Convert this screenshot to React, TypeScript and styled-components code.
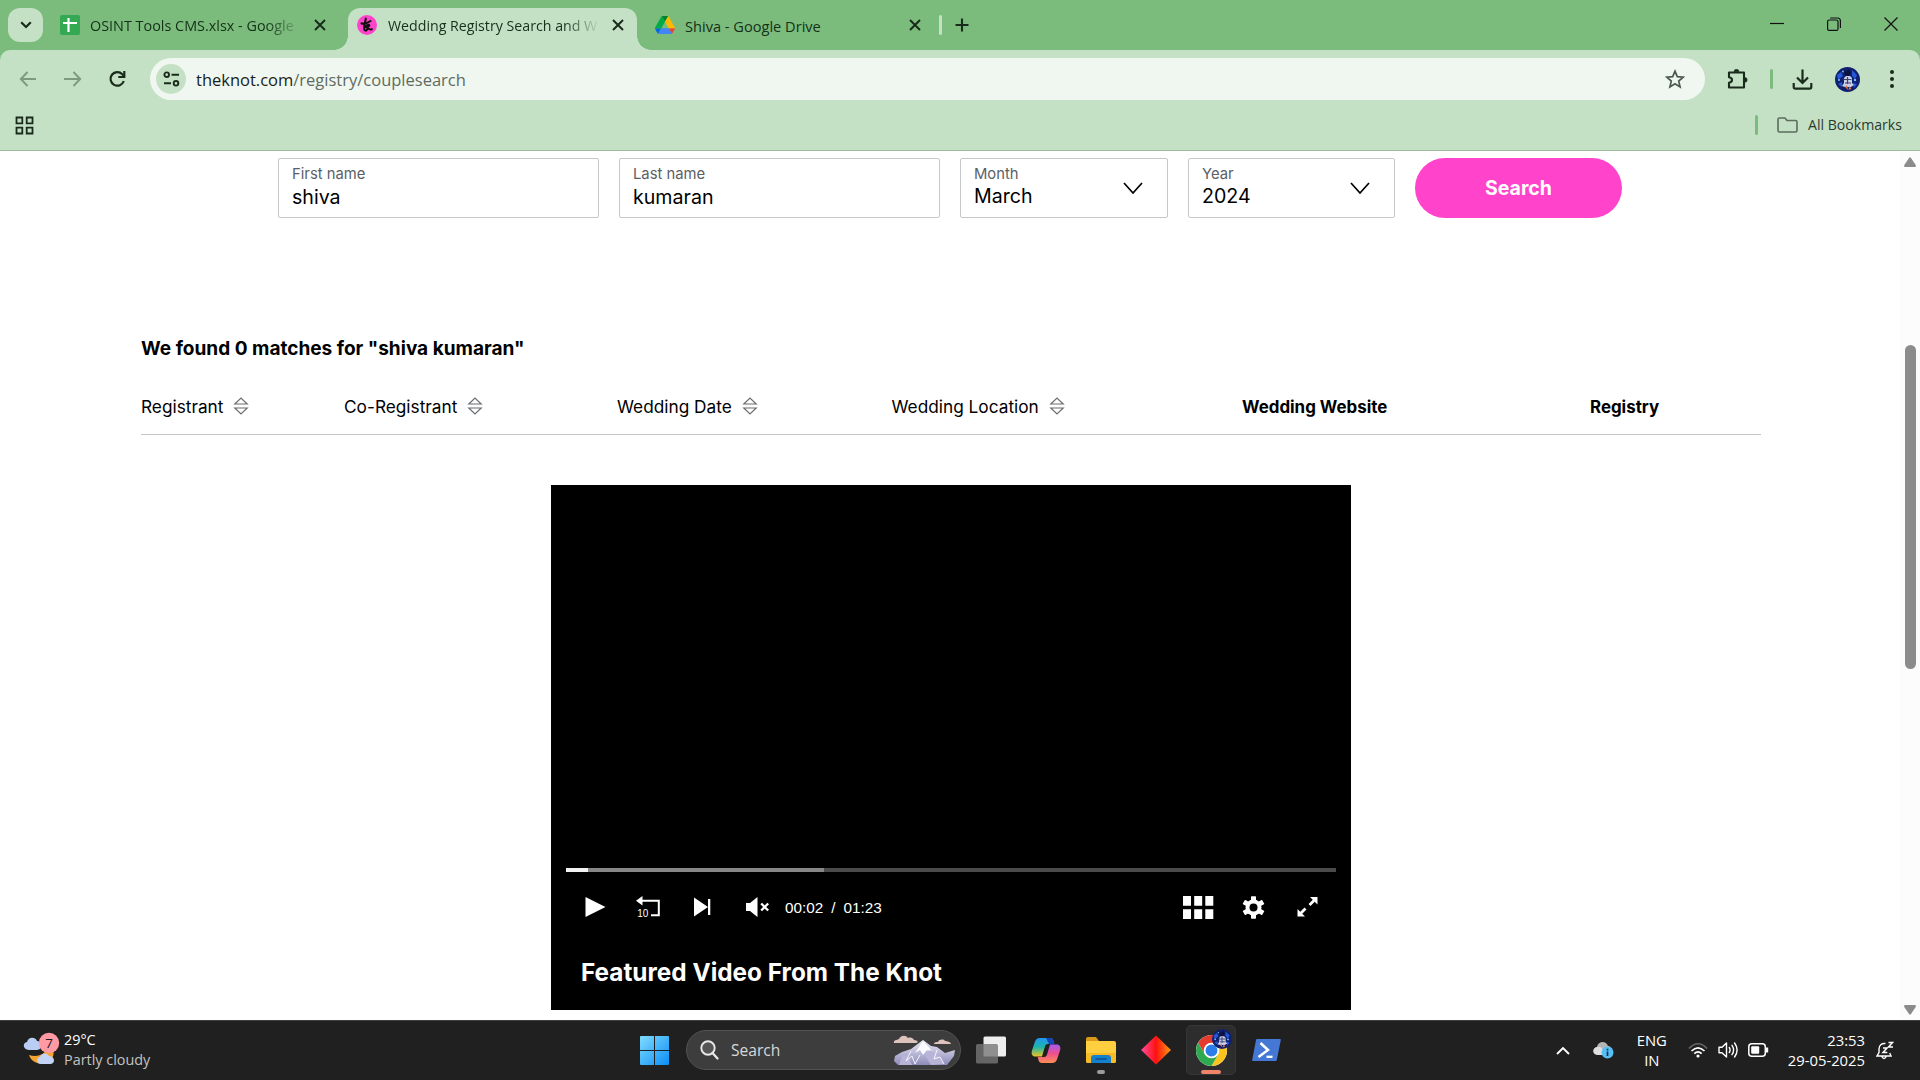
import React from 'react';
import styled, { createGlobalStyle } from 'styled-components';

const GlobalStyle = createGlobalStyle`
  * { box-sizing: border-box; }
  body { margin: 0; background: #fff; overflow: hidden; }
  svg { display: block; flex: none; }
`;

const ui = `"Open Sans", "Noto Sans", sans-serif`;
const web = `Inter, "Liberation Sans", sans-serif`;

const Screen = styled.div`
  width: 1920px;
  height: 1080px;
  display: flex;
  flex-direction: column;
  overflow: hidden;
`;

/* ---------- browser chrome ---------- */

const TabStrip = styled.header`
  height: 50px;
  flex: none;
  display: flex;
  align-items: flex-start;
  padding-left: 8px;
  background: #7bbc7c;
  font-family: ${ui};
`;

const TabSearch = styled.button`
  width: 35px;
  height: 34px;
  margin-top: 8px;
  display: grid;
  place-items: center;
  padding: 0;
  border: 0;
  border-radius: 12px;
  background: #c5e1c5;
`;

const Tab = styled.div<{ $active?: boolean; $width: number; $left: number; $right: number }>`
  position: relative;
  width: ${(p) => p.$width}px;
  height: 42px;
  margin-top: 8px;
  padding: 0 ${(p) => p.$right}px 8px ${(p) => p.$left}px;
  display: flex;
  align-items: center;
  border-radius: 12px 12px 0 0;
  background: ${(p) => (p.$active ? '#c5e1c5' : 'transparent')};
`;

const TabFlare = styled.i<{ $side: 'left' | 'right' }>`
  position: absolute;
  bottom: 0;
  ${(p) => p.$side}: -14px;
  width: 14px;
  height: 14px;
  background: radial-gradient(
    circle at ${(p) => (p.$side === 'left' ? '0 0' : '100% 0')},
    transparent 13.5px,
    #c5e1c5 14px
  );
`;

const TabTitle = styled.span<{ $gap: number; $size: number; $fade?: boolean }>`
  flex: 1;
  margin-left: ${(p) => p.$gap}px;
  margin-right: 12px;
  white-space: nowrap;
  font-size: ${(p) => p.$size}px;
  line-height: 22px;
  padding-top: 1px;
  color: #16301a;
  ${(p) => p.$fade && 'mask-image: linear-gradient(to right, #000 calc(100% - 36px), transparent);'}
`;

const StripDivider = styled.i`
  width: 3px;
  height: 20px;
  margin: 15px 13px 0 0;
  border-radius: 2px;
  background: #c5e1c5;
`;

const NewTab = styled.div`
  margin-top: 18px;
`;

const WindowButtons = styled.div`
  margin: 17px 22px 0 auto;
  display: flex;
  align-items: center;
  gap: 43px;
`;

const ToolbarBack = styled.div`
  height: 101px;
  flex: none;
  background: #7bbc7c;
`;

const ToolbarArea = styled.div`
  height: 101px;
  border-radius: 10px 10px 0 0;
  background: #c5e1c5;
  border-bottom: 1px solid #9dbb9e;
  font-family: ${ui};
`;

const Toolbar = styled.div`
  height: 58px;
  display: flex;
  align-items: center;
  padding: 0 20px 0 18px;
`;

const NavIcons = styled.div`
  width: 132px;
  display: flex;
  gap: 25px;
`;

const AddressBar = styled.div`
  width: 1555px;
  height: 42px;
  display: flex;
  align-items: center;
  padding: 0 20px 0 6px;
  border-radius: 21px;
  background: #f0f7f0;
`;

const SiteInfo = styled.div`
  width: 30px;
  height: 30px;
  display: grid;
  place-items: center;
  border-radius: 50%;
  background: #c5e1c5;
`;

const Url = styled.span`
  flex: 1;
  margin-left: 10px;
  padding-top: 1px;
  font-size: 16.5px;
  line-height: 24px;
  color: #5f6b60;
  b { font-weight: 400; color: #18221a; }
`;

const ToolbarActions = styled.div`
  flex: 1;
  display: flex;
  align-items: center;
  margin-left: 22px;
`;

const ActionGroup = styled.div<{ $gap: number; $before?: number }>`
  display: flex;
  align-items: center;
  gap: ${(p) => p.$gap}px;
  margin-left: ${(p) => p.$before ?? 0}px;
`;

const GreenDivider = styled.i`
  width: 3px;
  height: 20px;
  border-radius: 2px;
  background: #7bbc7c;
`;

const BookmarksBar = styled.div`
  height: 34px;
  display: flex;
  align-items: center;
  padding: 0 18px 0 15px;
  font-size: 14.1px;
  color: #2c3a2e;
`;

const AllBookmarks = styled.div`
  margin-left: auto;
  padding-bottom: 1px;
  display: flex;
  align-items: center;
  white-space: nowrap;
  svg { margin: 0 10px 0 19px; }
`;

/* ---------- page ---------- */

const Viewport = styled.div`
  flex: 1;
  min-height: 0;
  display: flex;
`;

const Page = styled.main`
  flex: 1;
  padding: 7px 139px 0 141px;
  font-family: ${web};
  color: #000;
`;

const SearchForm = styled.div`
  display: flex;
  padding-left: 137px;
  gap: 20px;
`;

const Field = styled.div<{ $width: number; $raise?: boolean }>`
  width: ${(p) => p.$width}px;
  height: 60px;
  display: flex;
  align-items: center;
  justify-content: space-between;
  padding: 0 24px 0 13px;
  border: 1px solid #c6c9cb;
  border-radius: 2px;
  div { margin-top: -3px; }
  span { line-height: ${(p) => (p.$raise ? 25 : 26)}px; }
`;

const FieldLabel = styled.label`
  display: block;
  font-size: 14.8px;
  line-height: 20px;
  color: #5b6067;
`;

const FieldValue = styled.span`
  display: block;
  font-size: 19.6px;
`;

const SearchButton = styled.button`
  width: 207px;
  height: 60px;
  padding: 0;
  border: 0;
  border-radius: 30px;
  background: #ff44cb;
  color: #fff;
  font: 700 19.5px ${web};
`;

const ResultTitle = styled.h2`
  margin: 117px 0 0;
  font-size: 19.05px;
  font-weight: 700;
  line-height: 28px;
`;

const ResultHead = styled.div`
  height: 72px;
  display: grid;
  grid-template-columns: 203px 273px 274.5px 350.5px 348px 1fr;
  align-items: center;
  padding-top: 15px;
  border-bottom: 1px solid #c4c5c6;
`;

const HeadCell = styled.div<{ $bold?: boolean }>`
  display: flex;
  align-items: center;
  gap: 10px;
  white-space: nowrap;
  font-size: ${(p) => (p.$bold ? 16.9 : 17.25)}px;
  font-weight: ${(p) => (p.$bold ? 700 : 400)};
  padding-top: ${(p) => (p.$bold ? 1 : 0)}px;
`;

const Player = styled.section`
  width: 800px;
  height: 525px;
  margin: 50px 0 0 410px;
  display: flex;
  flex-direction: column;
  justify-content: flex-end;
  padding: 0 15px;
  background: #000;
  color: #fff;
`;

const Progress = styled.div`
  display: flex;
  height: 4px;
  background: #4b4b4b;
`;

const Segment = styled.i<{ $width: number; $color: string }>`
  width: ${(p) => p.$width}px;
  background: ${(p) => p.$color};
`;

const Controls = styled.div`
  height: 70px;
  display: flex;
  align-items: center;
  padding: 0 17px 0 18px;
`;

const ControlGroup = styled.div<{ $gap: number; $end?: boolean }>`
  display: flex;
  align-items: center;
  gap: ${(p) => p.$gap}px;
  margin-left: ${(p) => (p.$end ? 'auto' : 0)};
`;

const Time = styled.span`
  display: flex;
  gap: 8px;
  margin-left: 14px;
  padding-top: 1px;
  font: 15.3px "Liberation Sans", sans-serif;
`;

const VideoTitle = styled.h3`
  height: 69px;
  margin: -1px 0 0 15px;
  padding-top: 13px;
  font-size: 24.35px;
  font-weight: 700;
  line-height: 36px;
`;

const Scrollbar = styled.div`
  width: 20px;
  display: flex;
  flex-direction: column;
  align-items: center;
  padding: 6px 0 5px;
  background: #fcfcfc;
`;

const Thumb = styled.i`
  width: 11px;
  height: 324px;
  margin: 178px 0 auto;
  border-radius: 6px;
  background: #8b8b8b;
`;

/* ---------- taskbar ---------- */

const TaskbarRoot = styled.footer`
  height: 60px;
  flex: none;
  display: flex;
  align-items: center;
  padding-bottom: 1px;
  border-top: 1px solid #3d3d3d;
  background: #202020;
  color: #fff;
  font-family: ${ui};
  font-size: 14.4px;
`;

const Weather = styled.div`
  width: 640px;
  display: flex;
  align-items: center;
  padding-left: 23px;
  gap: 4px;
  line-height: 20px;
`;

const Muted = styled.div`
  color: #c3c3c3;
`;

const SearchPill = styled.div`
  width: 275px;
  height: 40px;
  margin: 0 5px 0 17px;
  display: flex;
  align-items: center;
  padding: 0 4px 0 13px;
  border: 1px solid #525252;
  border-radius: 20px;
  background: #3d3d3d;
  color: #d8d8d8;
  font-size: 15.6px;
`;

const PillText = styled.span`
  flex: 1;
  margin-left: 12px;
`;

const Apps = styled.div`
  display: flex;
  align-items: center;
  gap: 5px;
`;

const AppSlot = styled.div<{ $active?: boolean }>`
  position: relative;
  width: 50px;
  height: 50px;
  display: grid;
  place-items: center;
  border-radius: 5px;
  background: ${(p) => (p.$active ? '#2d2d2d' : 'transparent')};
  border: 1px solid ${(p) => (p.$active ? '#363636' : 'transparent')};
`;

const RunMark = styled.i<{ $wide?: boolean }>`
  position: absolute;
  bottom: 0;
  left: 50%;
  transform: translateX(-50%);
  width: ${(p) => (p.$wide ? 20 : 8)}px;
  height: 4px;
  border-radius: 2px;
  background: ${(p) => (p.$wide ? '#f08369' : '#9b9b9b')};
`;

const ChromeBadge = styled.div`
  position: absolute;
  top: 3px;
  right: 3px;
`;

const Tray = styled.div`
  margin-left: auto;
  padding-right: 26px;
  display: flex;
  align-items: center;
`;

const CloudStatus = styled.span`
  margin-left: 23px;
`;

const Lang = styled.div`
  margin: 0 21px 0 23px;
  text-align: center;
  font-size: 14.8px;
  line-height: 20px;
  width: 30px;
  display: flex;
  flex-direction: column;
  align-items: center;
`;

const Clock = styled.div`
  margin: 0 11px 0 19px;
  text-align: right;
  font-size: 14.8px;
  line-height: 20px;
`;

const StatusIcons = styled.div`
  display: flex;
  align-items: center;
  gap: 10px;
`;

/* ---------- icons ---------- */

const CloseX = () => (
  <svg width="12" height="12" viewBox="0 0 12 12" stroke="#1a2b1c" strokeWidth="2">
    <path d="M1 1l10 10M11 1L1 11" />
  </svg>
);

const SheetsIcon = () => (
  <svg width="20" height="20" viewBox="0 0 20 20">
    <rect width="20" height="20" rx="2" fill="#34a853" />
    <path d="M8.500 3v14M3 8h14" stroke="#fff" strokeWidth="2.2" />
  </svg>
);

const KnotIcon = () => (
  <svg width="20" height="20" viewBox="0 0 20 20" fill="none" stroke="#111" strokeWidth="2.1" strokeLinecap="round">
    <circle cx="10" cy="10" r="10" fill="#ff44cb" stroke="none" />
    <path d="M8.800 3.500c-.6 4-1.800 7-1.600 10.200.2 2.600 2.200 2.200 3 .6M4.500 8.400c3 .6 6-.2 9-2.400M8 12c2.500-3 5.200-2.400 4-.9-1 1-2 .9-2.800.9 1.400.4 2.800 3.600 5.600 2.200" />
  </svg>
);

const DriveIcon = () => (
  <svg width="20" height="18" viewBox="0 0 87.3 78">
    <path fill="#0066da" d="m6.600 66.850 3.850 6.650c.8 1.400 1.950 2.500 3.300 3.300l13.750-23.800h-27.500c0 1.550.4 3.100 1.200 4.500z" />
    <path fill="#00ac47" d="m43.650 25-13.750-23.800c-1.350.8-2.500 1.900-3.300 3.300l-25.400 44a9.060 9.060 0 0 0 -1.200 4.500h27.500z" />
    <path fill="#ea4335" d="m73.550 76.800c1.350-.8 2.500-1.900 3.300-3.300l1.600-2.750 7.650-13.250c.8-1.400 1.200-2.950 1.200-4.500h-27.500l5.850 11.500z" />
    <path fill="#00832d" d="m43.650 25 13.750-23.800c-1.350-.8-2.900-1.200-4.500-1.200h-18.500c-1.600 0-3.150.45-4.500 1.200z" />
    <path fill="#4285f4" d="m59.800 53h-32.300l-13.750 23.800c1.350.8 2.900 1.200 4.500 1.200h50.800c1.600 0 3.150-.45 4.500-1.200z" />
    <path fill="#ffba00" d="m73.400 26.500-12.700-22c-.8-1.400-1.950-2.500-3.300-3.300l-13.750 23.800 16.150 28h27.450c0-1.550-.4-3.100-1.200-4.500z" />
  </svg>
);

const Arrow = ({ flip }: { flip?: boolean }) => (
  <svg width="20" height="20" viewBox="0 0 20 20" fill="none" stroke="#7d9a7f" strokeWidth="1.900">
    <path d={flip ? 'M1 10h16M10.500 3l6.700 7-6.700 7' : 'M18 10H3M9.500 3L2.800 10l6.700 7'} />
  </svg>
);

const Reload = () => (
  <svg width="20" height="20" viewBox="0 0 20 20" fill="none" stroke="#1a2b1c" strokeWidth="2.2">
    <path d="M15.800 12A6.800 6.800 0 1 1 14.300 5.200L16 7" />
    <path d="M16.300 2v6h-6" />
  </svg>
);

const Avatar = ({ size }: { size: number }) => (
  <svg width={size} height={size} viewBox="0 0 25 25">
    <circle cx="12.500" cy="12.500" r="12.500" fill="#10206e" />
    <path d="M2 8l4-3 2 4-5 4zM17 3l5 5-2 4-3-3zM3 17l4-2v5zM18 16l4 1-3 4z" fill="#2458d8" />
    <path d="M9 2l2 3 3-3 2 4-2 3h-4z" fill="#0b123d" />
    <path d="M9 11l2-2h4l2 2v5l2 2-3 2H10l-3-1 2-3z" fill="#c9cfe6" />
    <path d="M8.500 12.500h8M10 16h6M12.500 10v7" stroke="#3b4470" strokeWidth="1.200" />
    <path d="M10 20l2-2 1 5zM14.500 19l2 3-3 1z" fill="#e0703f" />
    <circle cx="4" cy="13" r="1" fill="#6fc3ff" />
    <circle cx="20" cy="13" r="1.200" fill="#6fc3ff" />
    <circle cx="8" cy="4.500" r=".9" fill="#6fc3ff" />
  </svg>
);

const SortIcon = () => (
  <svg width="16" height="18" viewBox="0 0 16 18" fill="none" stroke="#6a6d70" strokeWidth="1.200">
    <path d="M1.800 7L8 1l6.200 6zM1.800 11L8 17l6.200-6z" />
  </svg>
);

const ChevronDown = () => (
  <svg width="20" height="13" viewBox="0 0 20 13" fill="none" stroke="#000" strokeWidth="1.700">
    <path d="M1 1l9 10 9-10" />
  </svg>
);

const Gear = () => (
  <svg width="23" height="23" viewBox="-11.500 -11.500 23 23" fill="#fff">
    {[0, 60, 120].map((a) => (
      <rect key={a} x="-2.500" y="-11.200" width="5" height="22.400" rx=".6" transform={`rotate(${a})`} />
    ))}
    <circle r="8" />
    <circle r="4" fill="#000" />
  </svg>
);

const MountainArt = () => (
  <svg width="63" height="32" viewBox="0 0 63 32">
    <defs>
      <linearGradient id="mtn" x1="0" y1="0" x2="0" y2="1">
        <stop offset="0" stopColor="#eceaf6" />
        <stop offset="1" stopColor="#8d8cba" />
      </linearGradient>
    </defs>
    <path d="M1 9c-1-3 3-3 5-4 2-4 7-4 9-1 3-1 5 0 6 2 4 0 5 3 2 3z" fill="#dcc3bb" />
    <path d="M41 10c0-2 3-2 4-2 1-3 6-3 7-1 2 0 6 1 6 3z" fill="#dcc3bb" />
    <path d="M1 27l1-5 7-4 9-3 12-9 8 6 6 1 8 6 10-3-1 6-7 9H5z" fill="url(#mtn)" />
    <path d="M30 7l-8 12 5-3 3 5 4-5 6 2z" fill="#fbfbff" />
    <path d="M31 20l6-4 7 4 7 10-13 1zM10 20l6 4 3 7H6z" fill="#b7b4d8" />
    <path d="M18 17l-5 10 6-5 3 8 5-9M44 16l-3 9 6-2 4 7" fill="none" stroke="#f5f4fb" strokeWidth="1" />
  </svg>
);

const CopilotIcon = () => (
  <svg width="30" height="27" viewBox="0 0 30 27">
    <defs>
      <linearGradient id="cpa" x1="0" y1="0" x2="0" y2="1">
        <stop offset="0" stopColor="#2196f3" />
        <stop offset=".5" stopColor="#1fb5a8" />
        <stop offset="1" stopColor="#f0c420" />
      </linearGradient>
      <linearGradient id="cpb" x1="0" y1="0" x2="0" y2="1">
        <stop offset="0" stopColor="#a55af0" />
        <stop offset=".5" stopColor="#f0508c" />
        <stop offset="1" stopColor="#ff8f55" />
      </linearGradient>
    </defs>
    <path d="M9 1h10c2 0 3 1 3.500 3l.8 3H17c-2 0-2.600 1-3.200 3L11 19.500H4.500C1 19.500 0 17 1 13.500l3-9C5 2 6.500 1 9 1z" fill="url(#cpa)" />
    <path d="M15 1h4c2 0 3 1 3.500 3l.8 3H18z" fill="#1744b8" />
    <path d="M21 26H11c-2 0-3-1-3.500-3l-.8-3H13c2 0 2.600-1 3.200-3L19 7.500h6.500C29 7.500 30 10 29 13.500l-3 9c-1 2.500-2.500 3.500-5 3.500z" fill="url(#cpb)" />
  </svg>
);

const FolderIcon = () => (
  <svg width="32" height="28" viewBox="0 0 32 28">
    <path d="M1 3q0-2 2-2h8l3 4H1z" fill="#d99a1b" />
    <path d="M1 5h28q2 0 2 2v18q0 2-2 2H3q-2 0-2-2z" fill="#ffcf3f" />
    <path d="M1 17h30v8q0 2-2 2H3q-2 0-2-2z" fill="#f7bb26" />
    <path d="M6 27v-5q0-3 3-3h14q3 0 3 3v5z" fill="#1580cc" />
    <path d="M11 23h10" stroke="#0b4f8f" strokeWidth="1.600" strokeLinecap="round" />
  </svg>
);

const ChromeIcon = () => (
  <svg width="31" height="31" viewBox="-24 -24 48 48">
    <circle r="24" fill="#fff" />
    <path d="M-20.780 -12A24 24 0 0 1 20.780 -12H0A12 12 0 0 0 -10.390 6z" fill="#e33b2e" />
    <path d="M20.780 -12A24 24 0 0 1 0 24L10.390 6A12 12 0 0 0 0 -12z" fill="#fcc31e" />
    <path d="M0 24A24 24 0 0 1 -20.780 -12L-10.390 6A12 12 0 0 0 10.390 6z" fill="#2da94f" />
    <circle r="11.500" fill="#fff" />
    <circle r="9.200" fill="#2b7de9" />
  </svg>
);

export default function App() {
  return (
    <Screen>
      <GlobalStyle />
      <TabStrip>
        <TabSearch>
          <svg width="12" height="8" viewBox="0 0 12 8" fill="none" stroke="#1a2b1c" strokeWidth="2.200">
            <path d="M1.200 1.200L6 6l4.800-4.800" />
          </svg>
        </TabSearch>
        <Tab $width={305} $left={17} $right={22}>
          <SheetsIcon />
          <TabTitle $gap={10} $size={14.4} $fade>OSINT Tools CMS.xlsx - Google</TabTitle>
          <CloseX />
        </Tab>
        <Tab $active $width={289} $left={9} $right={13}>
          <TabFlare $side="left" />
          <TabFlare $side="right" />
          <KnotIcon />
          <TabTitle $gap={11} $size={14.2} $fade>Wedding Registry Search and W</TabTitle>
          <CloseX />
        </Tab>
        <Tab $width={302} $left={18} $right={18}>
          <DriveIcon />
          <TabTitle $gap={10} $size={14.6}>Shiva - Google Drive</TabTitle>
          <CloseX />
        </Tab>
        <StripDivider />
        <NewTab>
          <svg width="14" height="14" viewBox="0 0 14 14" stroke="#1a2b1c" strokeWidth="2.100">
            <path d="M7 .5v13M.5 7h13" />
          </svg>
        </NewTab>
        <WindowButtons>
          <svg width="14" height="14" viewBox="0 0 14 14" stroke="#111" strokeWidth="1.200">
            <path d="M0 6.500h14" />
          </svg>
          <svg width="14" height="14" viewBox="0 0 14 14" fill="none" stroke="#111" strokeWidth="1.200">
            <rect x=".6" y="3" width="10.400" height="10.400" rx="1.500" />
            <path d="M3.200 1h7.300q2.900 0 2.900 2.900v7" />
          </svg>
          <svg width="14" height="14" viewBox="0 0 14 14" stroke="#111" strokeWidth="1.200">
            <path d="M.5 .5l13 13M13.500 .5l-13 13" />
          </svg>
        </WindowButtons>
      </TabStrip>

      <ToolbarBack>
        <ToolbarArea>
          <Toolbar>
            <NavIcons>
              <Arrow />
              <Arrow flip />
              <Reload />
            </NavIcons>
            <AddressBar>
              <SiteInfo>
                <svg width="17" height="16" viewBox="0 0 17 16" fill="none" stroke="#1a2b1c" strokeWidth="1.900">
                  <circle cx="3.700" cy="3.700" r="2.300" />
                  <path d="M8.500 3.700h7.500M1 12.300h7" />
                  <circle cx="13" cy="12.300" r="2.300" />
                </svg>
              </SiteInfo>
              <Url><b>theknot.com</b>/registry/couplesearch</Url>
              <svg width="20" height="20" viewBox="0 0 20 20" fill="none" stroke="#4c574d" strokeWidth="1.700">
                <path d="M10 2.200l2.300 5.500 5.900.5-4.500 3.900 1.400 5.800-5.100-3.100-5.100 3.100 1.400-5.800L1.800 8.200l5.900-.5z" />
              </svg>
            </AddressBar>
            <ToolbarActions>
              <ActionGroup $gap={22}>
                <svg width="21" height="21" viewBox="0 0 21 21" fill="none" stroke="#1a2b1c" strokeWidth="2.100" strokeLinejoin="round">
                  <path d="M2 3.500h15v15H2v-4.800c4-.6 4-4.800 0-5.400z" />
                  <path d="M7 2.800a2.500 2.500 0 0 1 5 0zM17.800 8.500a2.400 2.400 0 0 1 0 4.800z" fill="#1a2b1c" strokeWidth=".6" />
                </svg>
                <GreenDivider />
              </ActionGroup>
              <ActionGroup $gap={22} $before={19}>
                <svg width="21" height="21" viewBox="0 0 20 21" fill="none" stroke="#1a2b1c" strokeWidth="2.200">
                  <path d="M10 .5v13M4.500 8.500l5.500 5.500 5.500-5.500M1.200 14v4q0 1.700 1.700 1.700h14.200q1.700 0 1.700-1.700v-4" />
                </svg>
                <Avatar size={25} />
              </ActionGroup>
              <ActionGroup $gap={0} $before={24}>
                <svg width="16" height="20" viewBox="0 0 16 20" fill="#1a2b1c">
                  <circle cx="8" cy="3" r="2" />
                  <circle cx="8" cy="10" r="2" />
                  <circle cx="8" cy="17" r="2" />
                </svg>
              </ActionGroup>
            </ToolbarActions>
          </Toolbar>
          <BookmarksBar>
            <svg width="19" height="19" viewBox="0 0 19 19" fill="none" stroke="#1a2b1c" strokeWidth="1.800">
              <path d="M1.500 1.500h5.800v5.800H1.500zM11.700 1.500h5.800v5.800h-5.800zM1.500 11.700h5.800v5.800H1.500zM11.700 11.700h5.800v5.800h-5.800z" />
            </svg>
            <AllBookmarks>
              <GreenDivider />
              <svg width="21" height="16" viewBox="0 0 21 16" fill="none" stroke="#5c6b5d" strokeWidth="1.600">
                <path d="M1 2.500Q1 1 2.500 1H8l2 2.500h8.500q1.500 0 1.500 1.500v8.500q0 1.500-1.500 1.500h-16Q1 15 1 13.500z" />
              </svg>
              All Bookmarks
            </AllBookmarks>
          </BookmarksBar>
        </ToolbarArea>
      </ToolbarBack>

      <Viewport>
        <Page>
          <SearchForm>
            <Field $width={321}>
              <div><FieldLabel>First name</FieldLabel><FieldValue>shiva</FieldValue></div>
            </Field>
            <Field $width={321}>
              <div><FieldLabel>Last name</FieldLabel><FieldValue>kumaran</FieldValue></div>
            </Field>
            <Field $width={208} $raise>
              <div><FieldLabel>Month</FieldLabel><FieldValue>March</FieldValue></div>
              <ChevronDown />
            </Field>
            <Field $width={207} $raise>
              <div><FieldLabel>Year</FieldLabel><FieldValue>2024</FieldValue></div>
              <ChevronDown />
            </Field>
            <SearchButton>Search</SearchButton>
          </SearchForm>

          <ResultTitle>We found 0 matches for "shiva kumaran"</ResultTitle>
          <ResultHead>
            <HeadCell>Registrant <SortIcon /></HeadCell>
            <HeadCell>Co-Registrant <SortIcon /></HeadCell>
            <HeadCell>Wedding Date <SortIcon /></HeadCell>
            <HeadCell>Wedding Location <SortIcon /></HeadCell>
            <HeadCell $bold>Wedding Website</HeadCell>
            <HeadCell $bold>Registry</HeadCell>
          </ResultHead>

          <Player>
            <Progress>
              <Segment $width={22} $color="#f2f2f2" />
              <Segment $width={236} $color="#868686" />
            </Progress>
            <Controls>
              <ControlGroup $gap={30}>
                <svg width="22" height="20" viewBox="0 0 22 20" fill="#fff"><path d="M1.500 0v20L21.500 10z" /></svg>
                <svg width="25" height="24" viewBox="0 0 25 24" fill="none" stroke="#fff" strokeWidth="2">
                  <path d="M4 5.800h18.800v14.500H15" />
                  <path d="M0 5.800L6.500 1v9.600z" fill="#fff" stroke="none" />
                  <text x="1.200" y="21.500" fill="#fff" stroke="none" fontFamily="Liberation Sans, sans-serif" fontSize="10">10</text>
                </svg>
                <svg width="24" height="20" viewBox="0 0 24 20" fill="#fff"><path d="M3 .5v19L17 10zM17 2h2.300v16H17z" /></svg>
                <svg width="26" height="20" viewBox="0 0 26 20" fill="#fff">
                  <path d="M1 6h4l7.500-6v20L5 14H1z" />
                  <path d="M16.200 6.500l7 7M23.200 6.500l-7 7" stroke="#fff" strokeWidth="2.300" />
                </svg>
              </ControlGroup>
              <Time><span>00:02</span><span>/</span><span>01:23</span></Time>
              <ControlGroup $gap={28} $end>
                <svg width="31" height="23" viewBox="0 0 31 23" fill="#fff">
                  <path d="M0 0h8v9.700H0zM11.200 0h8v9.700h-8zM22.300 0h8v9.700h-8zM0 13.300h8V23H0zM11.200 13.300h8V23h-8zM22.300 13.300h8V23h-8z" />
                </svg>
                <Gear />
                <svg width="26" height="20" viewBox="0 0 26 20" fill="#fff" stroke="#fff">
                  <path d="M17 0h7.500v7.500zM4.500 12v7.500H12z" stroke="none" />
                  <path d="M22 2.500L16.500 8M7 17l5.500-5.500" strokeWidth="2.800" />
                </svg>
              </ControlGroup>
            </Controls>
            <VideoTitle>Featured Video From The Knot</VideoTitle>
          </Player>
        </Page>
        <Scrollbar>
          <svg width="12" height="10" viewBox="0 0 12 10" fill="#8b8b8b"><path d="M5 1q1-1.300 2 0l4.700 7q.8 2-1 2H1.300q-1.800 0-1-2z" /></svg>
          <Thumb />
          <svg width="12" height="10" viewBox="0 0 12 10" fill="#8b8b8b"><path d="M5 9q1 1.300 2 0l4.700-7q.8-2-1-2H1.300q-1.800 0-1 2z" /></svg>
        </Scrollbar>
      </Viewport>

      <TaskbarRoot>
        <Weather>
          <svg width="37" height="38" viewBox="0 0 37 38">
            <path d="M29 16c3 5 2 12-4 15-8 4-17 0-19-7 9 3 17-1 18-8z" fill="#f5a431" />
            <path d="M6 19c-6 0-7-7-2-8 1-5 8-6 10-1 5 0 6 9 0 9z" fill="#b9cdf5" />
            <path d="M18 33c-5 0-5-6-1-7 1-4 7-5 9-1 6 0 7 8 1 8z" fill="#c3d4f7" />
            <circle cx="26" cy="12" r="10.200" fill="#ff99a4" />
            <text x="26" y="17" textAnchor="middle" fontFamily="Open Sans, sans-serif" fontSize="13.500" fill="#1c1c1c">7</text>
          </svg>
          <div>
            <div>29°C</div>
            <Muted>Partly cloudy</Muted>
          </div>
        </Weather>
        <svg width="29" height="29" viewBox="0 0 29 29">
          <defs>
            <linearGradient id="win" x1="0" y1="0" x2="1" y2="1">
              <stop offset="0" stopColor="#7fdcff" />
              <stop offset="1" stopColor="#0c8df5" />
            </linearGradient>
          </defs>
          <path d="M0 1q0-1 1-1h13v14H0zM15 0h13q1 0 1 1v13H15zM0 15h14v14H1q-1 0-1-1zM15 15h14v13q0 1-1 1H15z" fill="url(#win)" />
        </svg>
        <SearchPill>
          <svg width="19" height="20" viewBox="0 0 19 20" fill="none" stroke="#e8e8e8" strokeWidth="1.900">
            <circle cx="8" cy="8" r="6.700" fill="#555" />
            <path d="M12.500 13l5 5.500" strokeWidth="2.300" strokeLinecap="round" />
          </svg>
          <PillText>Search</PillText>
          <MountainArt />
        </SearchPill>
        <Apps>
          <AppSlot>
            <svg width="30" height="28" viewBox="0 0 30 28">
              <rect x="7.500" y=".5" width="22.500" height="20" rx="1.500" fill="#eeeeee" />
              <rect x="0" y="8" width="22" height="19.500" rx="1.500" fill="#777777" fillOpacity=".8" />
            </svg>
          </AppSlot>
          <AppSlot><CopilotIcon /></AppSlot>
          <AppSlot><FolderIcon /><RunMark /></AppSlot>
          <AppSlot>
            <svg width="30" height="30" viewBox="0 0 30 30">
              <defs>
                <linearGradient id="dia">
                  <stop offset="0" stopColor="#ff4fa0" />
                  <stop offset=".5" stopColor="#ff1010" />
                  <stop offset="1" stopColor="#ff9a10" />
                </linearGradient>
              </defs>
              <path d="M15 .5L30 15 15 29.500 0 15z" fill="url(#dia)" />
            </svg>
          </AppSlot>
          <AppSlot $active>
            <ChromeIcon />
            <ChromeBadge><Avatar size={20} /></ChromeBadge>
            <RunMark $wide />
          </AppSlot>
          <AppSlot>
            <svg width="29" height="22" viewBox="0 0 29 22">
              <path d="M5 0h23q1 0 .8 1l-4 20q-.2 1-1.300 1H1Q0 22 .2 21L4 1q.2-1 1-1z" fill="#4478d4" />
              <path d="M8.500 4l7.500 7-9.500 7" fill="none" stroke="#fff" strokeWidth="2.500" />
              <path d="M14.500 17.800h6" stroke="#fff" strokeWidth="2.300" />
            </svg>
          </AppSlot>
        </Apps>
        <Tray>
          <svg width="14" height="9" viewBox="0 0 14 9" fill="none" stroke="#fff" strokeWidth="1.900"><path d="M1 8l6-6 6 6" /></svg>
          <CloudStatus>
            <svg width="21" height="18" viewBox="0 0 21 18">
              <path d="M5 14C-1 14-1 7 4 6 5 0 13-1 15 5c5 0 6 9 0 9z" fill="#b5b5b5" />
              <path d="M5 14C-1 14-1 7 4 6c4-1 7 2 9 8z" fill="#dedede" />
              <circle cx="14.500" cy="11.500" r="6" fill="#56bff5" />
              <path d="M14.500 10.500v4.500M14.500 7.700v1.700" stroke="#10344a" strokeWidth="1.700" />
            </svg>
          </CloudStatus>
          <Lang><span>ENG</span><span>IN</span></Lang>
          <StatusIcons>
            <svg width="20" height="16" viewBox="0 0 20 16" fill="none" stroke="#fff" strokeWidth="1.700">
              <path d="M1 6.500Q10-3 19 6.500" stroke="#666" />
              <path d="M3.500 9q6.500-6.500 13 0M6.300 11.700q3.700-3.600 7.400 0" />
              <circle cx="10" cy="14" r="1.600" fill="#fff" stroke="none" />
            </svg>
            <svg width="20" height="18" viewBox="0 0 20 18" fill="none" stroke="#fff" strokeWidth="1.400" strokeLinecap="round">
              <path d="M1 6.300h3L8.500 2v14L4 11.700H1z" strokeLinejoin="round" />
              <path d="M11.300 6.500q1.600 2.500 0 5M14 4.300q3.200 4.700 0 9.400M16.600 2q5 7 0 14" />
            </svg>
            <svg width="21" height="14" viewBox="0 0 21 14" fill="none" stroke="#fff" strokeWidth="1.500">
              <rect x=".8" y=".8" width="16.500" height="12.400" rx="3" />
              <rect x="3.200" y="3.200" width="8" height="7.600" rx="1" fill="#fff" stroke="none" />
              <path d="M19 4.500v5" strokeWidth="2.400" />
            </svg>
          </StatusIcons>
          <Clock>23:53<br />29-05-2025</Clock>
          <svg width="18" height="19" viewBox="0 0 18 19" fill="none" stroke="#fff" strokeWidth="1.400">
            <path d="M9.500 2.500C5.500 2 3 4.500 3 8v3.500L1 15h14l-1.300-3M5.800 15.500q2.200 4 4.400 0" />
            <path d="M7 7h4l-4 4.500h4.300M12.500 1.500h4l-4 4.500h4.500" strokeWidth="1.500" />
          </svg>
        </Tray>
      </TaskbarRoot>
    </Screen>
  );
}
